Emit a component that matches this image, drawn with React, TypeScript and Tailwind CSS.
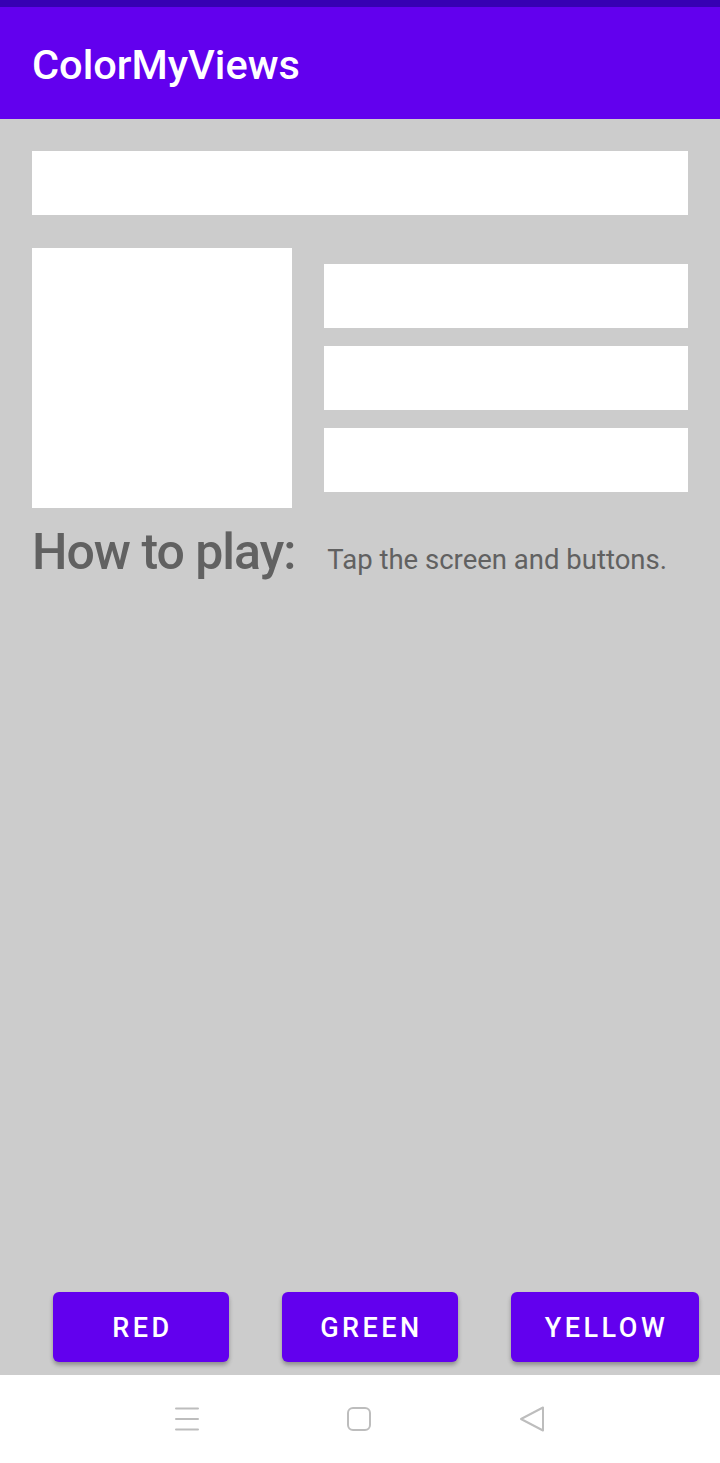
import React from 'react'

const font = { fontFamily: 'Roboto, "Noto Sans", sans-serif' }

function NavBar() {
    return (
        <div className="flex h-[88px] items-center justify-center bg-white">
            <div className="flex w-[370px] items-center justify-between">
                <svg width="24" height="24" viewBox="0 0 24 24" fill="none" stroke="#bdbdbd" strokeWidth="2" strokeLinecap="round">
                    <path d="M1 1.5h22M1 12h22M1 22.5h22" />
                </svg>
                <svg width="24" height="24" viewBox="0 0 24 24" fill="none" stroke="#bdbdbd" strokeWidth="2">
                    <rect x="1" y="1" width="22" height="22" rx="5" />
                </svg>
                <svg width="26" height="26" viewBox="0 0 26 26" fill="none" stroke="#bdbdbd" strokeWidth="2" strokeLinejoin="round">
                    <path d="M24 1.5v23L2 13z" />
                </svg>
            </div>
        </div>
    )
}

function ColorButton({ label, width }: { label: string; width: string }) {
    return (
        <button
            className={`flex h-[70px] ${width} items-center justify-center rounded-[6px] bg-[#6200ee] pl-[3px] pt-[3px] text-[27px] font-medium uppercase tracking-[0.13em] text-white shadow-[0_3px_4px_rgba(0,0,0,0.3)]`}
        >
            {label}
        </button>
    )
}

export default function App() {
    return (
        <div style={font} className="flex h-[1463px] w-[720px] flex-col bg-[#cccccc]">
            <div className="h-[7px] bg-[#3700b3]" />
            <div className="flex h-[112px] items-center bg-[#6200ee] px-[32px] pt-[5px]">
                <h1 className="text-[41.5px] font-medium text-white">ColorMyViews</h1>
            </div>
            <div className="flex flex-1 flex-col px-[32px] pt-[32px]">
                <div className="h-[64px] bg-white" />
                <div className="mt-[33px] flex gap-[32px]">
                    <div className="h-[260px] w-[260px] bg-white" />
                    <div className="flex flex-1 flex-col gap-[18px] pt-[16px]">
                        <div className="h-[64px] bg-white" />
                        <div className="h-[64px] bg-white" />
                        <div className="h-[64px] bg-white" />
                    </div>
                </div>
                <div className="mt-[8px] flex items-baseline text-[#616161]">
                    <span className="text-[50px] font-medium leading-[72px] tracking-[-0.02em]">How to play:</span>
                    <span className="ml-[32px] text-[27.5px]">Tap the screen and buttons.</span>
                </div>
            </div>
            <div className="flex gap-[53px] pb-[13px] pl-[53px]">
                <ColorButton label="Red" width="w-[176px]" />
                <ColorButton label="Green" width="w-[176px]" />
                <ColorButton label="Yellow" width="w-[188px]" />
            </div>
            <NavBar />
        </div>
    )
}
